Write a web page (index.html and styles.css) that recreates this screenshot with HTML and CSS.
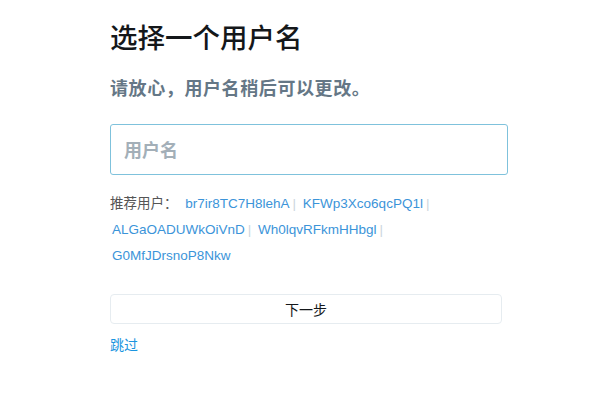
FILE: index.html
```html
<!DOCTYPE html>
<html lang="zh-CN">
<head>
  <meta charset="UTF-8">
  <title>选择一个用户名</title>
  <link rel="stylesheet" href="styles.css">
</head>
<body>
  <div class="signup">
    <h1 class="title">选择一个用户名</h1>
    <p class="subtitle">请放心，用户名稍后可以更改。</p>
    <input class="username" type="text" placeholder="用户名">
    <div class="suggest">
      <span class="suggest-label">推荐用户：</span>
      <a href="#">br7ir8TC7H8lehA</a><span class="sep">|</span>
      <a href="#">KFWp3Xco6qcPQ1l</a><span class="sep">|</span>
      <a href="#">ALGaOADUWkOiVnD</a><span class="sep">|</span>
      <a href="#">Wh0lqvRFkmHHbgl</a><span class="sep">|</span>
      <a href="#">G0MfJDrsnoP8Nkw</a>
    </div>
    <button class="next">下一步</button>
    <a class="skip" href="#">跳过</a>
  </div>
</body>
</html>
```

FILE: styles.css
```css
:root{--blue:#1b95e0;--link:#3b94d9;--muted:#657786;--border:#e6ecf0;--font:"Liberation Sans","Noto Sans CJK SC",sans-serif}
body{margin:0;background:#fff;font-family:var(--font);color:#14171a}
.signup{width:398px;margin-left:110px;padding-top:21px}
.title{margin:0;font-size:27.5px;font-weight:500;line-height:36px;color:#14171a}
.subtitle{margin:20px 0 0;font-size:18px;letter-spacing:.6px;font-weight:bold;line-height:24px;color:var(--muted)}
.username{display:block;box-sizing:border-box;width:398px;height:51px;margin-top:23px;padding:3px 13px 0;border:1px solid #7fc2dc;border-radius:3px;font-family:var(--font);font-size:18px;outline:none}
.username::placeholder{color:#a3afb8;font-weight:bold}
.suggest{margin-top:16px;font-size:13.5px;line-height:26px;color:#555}
.suggest-label{margin-right:2px}
.suggest a{color:var(--link);text-decoration:none;padding:0 2px}
.sep{color:#ccd6dd;padding:0 1px}
.next{display:block;width:392px;height:30px;margin-top:25px;background:#fff;border:1px solid var(--border);border-radius:4px;font-family:var(--font);font-size:14px;color:#14171a;cursor:pointer}
.skip{display:inline-block;margin-top:10px;font-size:14px;color:var(--blue);text-decoration:none}
```
